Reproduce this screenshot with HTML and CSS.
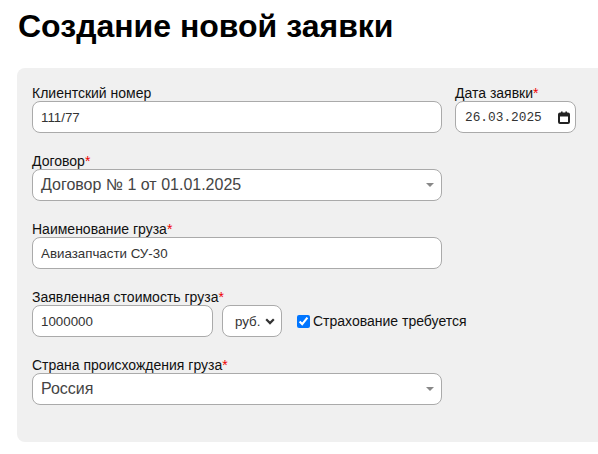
FILE: index.html
```html
<!DOCTYPE html>
<html lang="ru">
<head>
<meta charset="utf-8">
<title>Создание новой заявки</title>
<link rel="stylesheet" href="styles.css">
</head>
<body>
<div class="page">
  <h1 class="title">Создание новой заявки</h1>
  <form class="panel">
    <div class="row">
      <div class="group group-wide">
        <label class="label">Клиентский номер</label>
        <input class="input" type="text" value="111/77">
      </div>
      <div class="group group-date">
        <label class="label">Дата заявки<span class="req">*</span></label>
        <div class="input date">
          <span class="date-text">26.03.2025</span>
          <svg class="cal" width="12" height="13" viewBox="0 0 12 13">
            <rect x="1" y="2.5" width="10" height="9.5" rx="1" fill="none" stroke="#222" stroke-width="2"/>
            <rect x="1" y="2.5" width="10" height="3" fill="#222"/>
            <rect x="3" y="0.5" width="1.6" height="2.5" fill="#222"/>
            <rect x="7.4" y="0.5" width="1.6" height="2.5" fill="#222"/>
          </svg>
        </div>
      </div>
    </div>

    <div class="group group-wide">
      <label class="label">Договор<span class="req">*</span></label>
      <div class="input select-big">
        <span>Договор № 1 от 01.01.2025</span>
        <svg class="tri" width="8" height="4" viewBox="0 0 8 4"><path d="M0 0h8L4 4z" fill="#888"/></svg>
      </div>
    </div>

    <div class="group group-wide">
      <label class="label">Наименование груза<span class="req">*</span></label>
      <input class="input" type="text" value="Авиазапчасти СУ-30">
    </div>

    <div class="group">
      <label class="label">Заявленная стоимость груза<span class="req">*</span></label>
      <div class="row-inline">
        <input class="input input-num" type="text" value="1000000">
        <div class="input select-small">
          <span>руб.</span>
          <svg class="chev" width="10" height="7" viewBox="0 0 10 7"><path d="M1.2 1.3L5 5.1L8.8 1.3" fill="none" stroke="#333" stroke-width="2.2"/></svg>
        </div>
        <label class="check"><input type="checkbox" checked class="cb">Страхование требуется</label>
      </div>
    </div>

    <div class="group group-wide">
      <label class="label">Страна происхождения груза<span class="req">*</span></label>
      <div class="input select-big">
        <span>Россия</span>
        <svg class="tri" width="8" height="4" viewBox="0 0 8 4"><path d="M0 0h8L4 4z" fill="#888"/></svg>
      </div>
    </div>
  </form>
</div>
</body>
</html>
```

FILE: styles.css
```css
* { box-sizing: border-box; }
html, body { margin: 0; padding: 0; background: #fff; }
body { font-family: "Liberation Sans", Arial, sans-serif; color: #222; overflow: hidden; }

.page { padding: 0 0 0 17px; width: 598px; }

.title {
  font-size: 32px;
  font-weight: bold;
  color: #000;
  margin: 0;
  padding: 8px 0 0 1px;
  height: 68px;
  line-height: 37px;
}

.panel {
  background: #f0f0f0;
  border-radius: 8px 0 0 8px;
  padding: 17px 15px 17px 15px;
  width: 581px;
}

.row { display: flex; gap: 13px; }

.group { margin-bottom: 20px; }
.group-wide { width: 410px; }
.group-date { width: 121px; }

.label {
  display: block;
  font-size: 14px;
  line-height: 16px;
  color: #111;
}
.req { color: #e00; }

.input {
  display: block;
  width: 100%;
  height: 32px;
  border: 1px solid #aaa;
  border-radius: 8px;
  background: #fff;
  padding: 0 8px;
  font-family: "Liberation Sans", Arial, sans-serif;
  font-size: 13.33px;
  color: #333;
  outline: none;
}

.date {
  display: flex;
  align-items: center;
  justify-content: space-between;
  padding: 0 5px 0 9px;
}
.date-text {
  font-family: "Liberation Mono", "DejaVu Sans Mono", monospace;
  font-size: 12.8px;
  color: #333;
}
.cal { display: block; }

.select-big {
  display: flex;
  align-items: center;
  justify-content: space-between;
  padding: 0 7px 0 8px;
  font-size: 16px;
  color: #444;
}
.tri { display: block; }

.row-inline { display: flex; align-items: center; }
.input-num { width: 181px; }
.select-small {
  width: 60px;
  margin-left: 9px;
  display: flex;
  align-items: center;
  justify-content: space-between;
  padding: 0 6px 0 12px;
  font-size: 13.33px;
  color: #333;
}
.chev { display: block; }

.check {
  display: flex;
  align-items: center;
  margin-left: 15px;
  font-size: 14px;
  color: #111;
}
.cb {
  width: 13px;
  height: 13px;
  margin: 0 3px 0 0;
  accent-color: #0075ff;
}
```
